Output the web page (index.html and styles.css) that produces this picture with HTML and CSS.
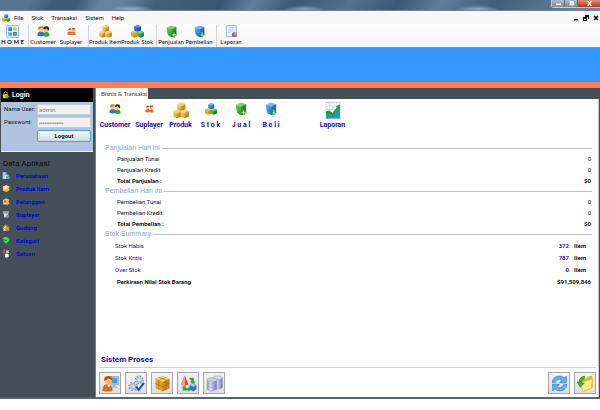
FILE: index.html
```html
<!DOCTYPE html>
<html lang="id">
<head>
<meta charset="utf-8">
<title>Sistem Stok</title>
<link rel="stylesheet" href="styles.css">
</head>
<body>
<svg class="defs" aria-hidden="true">
  <defs>
    <linearGradient id="gold" x2="1" y2="1"><stop stop-color="#ffe36a"/><stop offset="1" stop-color="#c98a06"/></linearGradient>
    <linearGradient id="green" x2="1" y2="1"><stop stop-color="#6fdc5a"/><stop offset="1" stop-color="#117a1d"/></linearGradient>
    <linearGradient id="blue" x2="1" y2="1"><stop stop-color="#5fb8ff"/><stop offset="1" stop-color="#0b5cc0"/></linearGradient>
    <linearGradient id="disk"><stop stop-color="#8f91c4"/><stop offset=".35" stop-color="#dcdcf2"/><stop offset="1" stop-color="#7377b4"/></linearGradient>
    <symbol id="cube" viewBox="0 0 16 16"><path d="M1 5q0-1 1-2l5-2q1-.4 2 0l5 2q1 1 1 2v6q0 1-1 2l-5 2q-1 .6-2 0l-5-2q-1-1-1-2z"/><path d="M2 4l6 3 6-3-5-2.500q-1-.4-2 0z" fill="#fff" opacity=".3"/><path d="M8 7v8.300l6-2.300q1-1 1-2V4.500z" fill="#000" opacity=".14"/></symbol>
    <symbol id="cubes-gold" viewBox="0 0 32 32"><g fill="url(#gold)"><use href="#cube" x="7" y="-1" width="19" height="19"/><use href="#cube" x="-1" y="13" width="19" height="19"/><use href="#cube" x="14" y="13" width="19" height="19"/></g></symbol>
    <symbol id="cubes-mix" viewBox="0 0 32 32"><use href="#cube" x="7" y="-1" width="19" height="19" fill="url(#blue)"/><use href="#cube" x="-1" y="13" width="19" height="19" fill="#e3ad10"/><use href="#cube" x="14" y="13" width="19" height="19" fill="url(#green)"/></symbol>
    <symbol id="cubes-stock" viewBox="0 0 32 32"><use href="#cube" x="7" y="-1" width="19" height="19" fill="#1766d4"/><use href="#cube" x="-1" y="13" width="19" height="19" fill="#e3ad10"/><use href="#cube" x="14" y="13" width="19" height="19" fill="url(#green)"/></symbol>
    <symbol id="people" viewBox="0 0 32 28"><path d="M1 24q0-10 9-10t9 10q-9 4-18 0z" fill="#2573d4"/><circle cx="10" cy="9" r="6" fill="#f6c184"/><path d="M3 9q-1-8 7-8 8 0 7 7l-5-3q-5 3-9 4z" fill="#c57b10"/><path d="M15 25q0-10 8-10t8 10q-8 4-16 0z" fill="#35a342"/><circle cx="22" cy="10" r="6" fill="#f4bd82"/><path d="M16 9q-1-8 7-8 7 0 7 8l-3 4q0-5-4-7-3 3-7 3z" fill="#2c2018"/></symbol>
    <symbol id="suppliers" viewBox="0 0 32 28"><path d="M1 24q0-10 9-10t9 10q-9 4-18 0z" fill="#df6a1c"/><circle cx="10" cy="10" r="5" fill="#f6c184"/><path d="M4 9q0-7 7-7 6 0 6 6l-5-2q-4 3-8 3z" fill="#b03010"/><path d="M15 25q0-10 8-10t8 10q-8 4-16 0z" fill="#e8832a"/><path d="M21 17h4l-2 7z" fill="#326fc3"/><circle cx="23" cy="9" r="6" fill="#f4bd82"/><path d="M17 8q0-7 7-7 6 0 6 7l-6-2q-3 2-7 2z" fill="#d0501a"/></symbol>
    <symbol id="box-shape" viewBox="0 0 28 32"><path d="M2 6L13 1l13 4v15q-3 8-11 10Q6 28 4 22z"/><path d="M2 6L13 1l13 4-11 6z" fill="#fff" opacity=".3"/><path d="M15 11l11-6v15q-3 8-11 10z" fill="#000" opacity=".16"/></symbol>
    <symbol id="sell" viewBox="0 0 28 32"><use href="#box-shape" fill="url(#green)"/><path d="M18 18h4v4h4v4h-4v4h-4v-4h-4v-4h4z" fill="#9cf56e" stroke="#0c7115"/></symbol>
    <symbol id="buy" viewBox="0 0 28 32"><use href="#box-shape" fill="url(#blue)"/><path d="M18 17h5v6h4l-6 7-7-7h4z" fill="#73e34c" stroke="#1b65a3"/></symbol>
    <symbol id="home" viewBox="0 0 28 28"><rect x="1" y="1" width="26" height="26" rx="2" fill="#d7efff" stroke="#87bce3" stroke-width="2"/><path d="M5 5h8v8H5z" fill="#318bcf"/><path d="M16 5h7v7h-7z" fill="#f1c739"/><path d="M5 16h8v7H5z" fill="#55a8d5"/><path d="M15 15h8v8h-8z" fill="#2a71b8"/><path d="M17 17h4v4h-4z" fill="#78d160"/></symbol>
    <symbol id="report" viewBox="0 0 28 30"><path d="M2 1h23v26H2z" fill="#eef0fb" stroke="#a1a6ce" stroke-width="2"/><path d="M6 6h15M6 11h15M6 16h10M11 4v16M17 4v12" stroke="#bfc3e2" stroke-width="1.500"/><circle cx="21" cy="22" r="6" fill="#7a83c0"/><path d="M21 22v-6a6 6 0 0 1 6 6z" fill="#ecaa70"/><path d="M15 22h6l-4 5z" fill="#b23f46"/></symbol>
    <symbol id="chart" viewBox="0 0 30 34"><path d="M1 1h28v32H1z" fill="#f9fafc" stroke="#9ba8b5"/><path d="M1 8h28M1 15h28M8 1v20M15 1v18M22 1v15" stroke="#b9c3cb"/><path d="M1 33V24l7-2 6 4 15-13v20z" fill="#2a8fe0"/><path d="M1 19l7-2 6 5L23 10l-3-1 9-4v13l-3-3-11 14-7-5-7 2z" fill="#20a32a"/></symbol>
    <symbol id="lock" viewBox="0 0 20 20"><path d="M5 9V6q0-4 4-4t4 4v3" fill="none" stroke="#d6d6c2" stroke-width="2"/><rect x="2" y="8" width="13" height="10" rx="2" fill="#e4d326"/><path d="M8 12h5V9l6 5-6 5v-3H8z" fill="#37c42d"/></symbol>
    <symbol id="company" viewBox="0 0 24 24"><path d="M2 2h11v20H2z" fill="#bcdcf6"/><path d="M4 5h3M9 5h3M4 9h3M9 9h3M4 13h3" stroke="#4c83b5" stroke-width="2"/><path d="M10 10h10v12H8z" fill="#e8f4fd"/><circle cx="18" cy="17" r="6" fill="#338ed6"/><path d="M18 13v1M18 16v5" stroke="#fff" stroke-width="2"/></symbol>
    <symbol id="item" viewBox="0 0 24 24"><path d="M2 7l10-5 10 4v11l-9 6-10-5z" fill="#efb93e"/><path d="M2 7l10-5 10 4-9 6z" fill="#ffe49a"/><circle cx="9" cy="12" r="4" fill="#fff3ce"/></symbol>
    <symbol id="client" viewBox="0 0 24 24"><path d="M2 8l10-6 10 5-2 5H4z" fill="#e9c37b"/><path d="M4 10h14v11H4z" fill="#eae3d8"/><circle cx="10" cy="12" r="4" fill="#b67131"/><circle cx="17" cy="16" r="5" fill="#f0b451"/><path d="M5 22q4-7 9 0z" fill="#9e7fc1"/></symbol>
    <symbol id="vendor" viewBox="0 0 24 24"><path d="M2 3h19l-2 7H4z" fill="#cad7cf"/><path d="M2 5h19" stroke="#6c9b85" stroke-width="3"/><path d="M6 10h13v11H6z" fill="#aeb8c2"/><circle cx="10" cy="14" r="4" fill="#f0e9dd"/><path d="M13 14h8v7h-8z" fill="#8979bb"/></symbol>
    <symbol id="warehouse" viewBox="0 0 24 24"><path d="M1 12L11 2l11 9-3 2v9H4v-9z" fill="#f4dbc0"/><path d="M1 12L11 2l11 9-3 2-8-7-8 8z" fill="#a45828"/><path d="M10 13l6-3 6 3v7l-6 3-6-3z" fill="#d68c35"/></symbol>
    <symbol id="category" viewBox="0 0 24 24"><path d="M1 5l10-4 11 5v11l-9 6Q3 19 1 5z" fill="#159c42"/><path d="M1 5l10-4 11 5-9 5z" fill="#56d16e"/><path d="M7 13l5 5 9-9" fill="none" stroke="#b8f7ba" stroke-width="3"/></symbol>
    <symbol id="unit" viewBox="0 0 24 26"><path d="M3 1h6v11H3z" fill="#e9473a"/><path d="M13 4h8v7h-8z" fill="#efefe8"/><path d="M17 3l4 4-4 2z" fill="#37ad45"/><rect x="9" y="13" width="11" height="12" rx="4" fill="#f5f5ef"/><path d="M2 14h5v7H2z" fill="#ae2a2a"/></symbol>
    <symbol id="user-pc" viewBox="0 0 32 32"><path d="M13 3h18v15H13z" fill="#c8dcef" stroke="#5f83ad"/><path d="M15 5h14v11H15z" fill="#5397d8"/><path d="M20 18h5v4h4v2H16v-2h4z" fill="#9fb1c3"/><path d="M1 30q-1-12 9-13 10 1 10 13-9 2-19 0z" fill="#e36b16"/><path d="M9 18l4 5 3-5z" fill="#fff"/><circle cx="12" cy="11" r="7" fill="#f8bb72"/><path d="M4 11q-1-9 8-9 8 0 7 8l-7-4q-3 4-8 5z" fill="#b85808"/></symbol>
    <symbol id="gear" viewBox="0 0 20 20"><circle cx="10" cy="10" r="7.500" stroke-width="4" stroke-dasharray="3 2.900" fill="none" stroke="#8d93ba"/><circle cx="10" cy="10" r="5" fill="none" stroke="#b5bbdc" stroke-width="4"/></symbol>
    <symbol id="gears" viewBox="0 0 32 32"><use href="#gear" x="12" y="0" width="18" height="18"/><use href="#gear" x="0" y="12" width="19" height="19"/><path d="M15 22l5 6 10-13" fill="none" stroke="#1658bd" stroke-width="4"/></symbol>
    <symbol id="package" viewBox="0 0 32 32"><path d="M3 7l13-5 13 5v18l-13 6-13-6z" fill="#dfa52b"/><path d="M3 7l13-5 13 5-13 6z" fill="#f6d272"/><path d="M16 13l13-6v18l-13 6z" fill="#c4861a"/><path d="M9 4.500L23 10v18M23 4.500L9 10v18M3 16l13 6 13-6" fill="none" stroke="#94661c"/></symbol>
    <symbol id="shapes" viewBox="0 0 32 32"><path d="M9 1l7 17q-8 4-14 0z" fill="#e2422b"/><path d="M9 1l1 18q-5 1-8-1z" fill="#ff9b7e"/><path d="M18 5h8v7h4l-6 6-6-6h3V9h-3zM5 21h6v4h5v-4l5 6-5 5v-3H5z" fill="#28a83a"/><path d="M18 19l6-3 7 3v8l-6 4-7-4z" fill="#3472c9"/><path d="M18 19l6-3 7 3-6 3z" fill="#9ac7f5"/></symbol>
    <symbol id="database" viewBox="0 0 32 32"><g stroke="#8587ba" stroke-width=".7"><path d="M14 5v19q8 5 17 0V5z" fill="url(#disk)"/><ellipse cx="22.500" cy="5" rx="8.500" ry="3.500" fill="#d9d9ef"/><path d="M2 9v18q9 6 18 0V9z" fill="url(#disk)"/><ellipse cx="11" cy="9" rx="9" ry="4" fill="#c9c9e6"/><path d="M2 15q9 5 18 0M2 21q9 5 18 0" fill="none"/></g></symbol>
    <symbol id="refresh" viewBox="0 0 32 32"><g fill="#63b0f0" stroke="#2268b8"><path d="M2 14Q4 2 16 2q6 0 9 4l4-4v13H16l4-5q-4-3-7-1-4 2-5 5z"/><path d="M30 18q-2 12-14 12-6 0-9-4l-4 4V17h13l-4 5q4 3 7 1 4-2 5-5z"/></g></symbol>
    <symbol id="folder" viewBox="0 0 32 32"><path d="M8 9l10-3 2-3 9-2 1 22-16 8z" fill="#e9b528"/><path d="M6 14l23-7-2 18-16 6z" fill="#fff080" stroke="#d6a51d"/><path d="M14 2v5q-6 1-5 8h5l-8 8-6-10h4Q4 4 14 2z" fill="#35b52c" stroke="#14821c"/></symbol>
  </defs>
</svg>

<div class="app">
  <header class="titlebar">
    <div class="window-controls">
      <button class="win" aria-label="Minimize"><svg viewBox="0 0 8 6"><path d="M1 3h6v2H1z"/></svg></button>
      <button class="win" aria-label="Restore"><svg viewBox="0 0 8 6"><path d="M2 0h4v1h1v4H2zM4 2v2h1V2z" fill-rule="evenodd"/></svg></button>
      <button class="win close" aria-label="Close"><svg viewBox="0 0 8 6"><path d="M1 0h2l1 2 1-2h2L5 3l2 3H5L4 4 3 6H1l2-3z"/></svg></button>
    </div>
  </header>

  <nav class="menubar">
    <svg class="app-icon"><use href="#cubes-mix"/></svg>
    <button>File</button><button>Stok</button><button>Transaksi</button><button>Sistem</button><button>Help</button>
    <div class="child-controls">
      <button aria-label="Minimize child"><svg viewBox="0 0 6 6"><path d="M1 4h4v1.500H1z"/></svg></button>
      <button aria-label="Restore child"><svg viewBox="0 0 6 6"><path d="M2 0h4v4H5V2H2zM0 2h4v4H0zM1 4v1h2V4z" fill-rule="evenodd"/></svg></button>
      <button aria-label="Close child"><svg viewBox="0 0 6 6"><path d="M1 1l4 4M5 1L1 5" stroke="#000" stroke-width="1.500"/></svg></button>
    </div>
  </nav>

  <div class="toolbar">
    <div class="group"><button class="home"><svg><use href="#home"/></svg>H O M E</button></div>
    <div class="group pair"><button><svg><use href="#people"/></svg>Customer</button><button><svg class="small"><use href="#suppliers"/></svg>Suplayer</button></div>
    <div class="group wide"><button><svg><use href="#cubes-gold"/></svg>Produk Item</button><button><svg><use href="#cubes-stock"/></svg>Produk Stok</button></div>
    <div class="group pair"><button><svg><use href="#sell"/></svg>Penjualan</button><button><svg><use href="#buy"/></svg>Pembelian</button></div>
    <div class="group"><button><svg><use href="#report"/></svg>Laporan</button></div>
  </div>

  <div class="banner"></div>

  <div class="body">
    <aside class="sidebar">
      <form class="login">
        <h2><svg><use href="#lock"/></svg>Login</h2>
        <div class="fields">
          <label for="user">Nama User:</label><input id="user" type="text" value="admin">
          <label for="pass">Password:</label><input id="pass" type="password" value="secretpassword">
          <button type="button">Logout</button>
        </div>
      </form>
      <h2 class="side-title">Data Aplikasi</h2>
      <nav class="links">
        <a href="#"><svg><use href="#company"/></svg>Perusahaan</a>
        <a href="#"><svg><use href="#item"/></svg>Produk Item</a>
        <a href="#"><svg><use href="#client"/></svg>Pelanggan</a>
        <a href="#"><svg><use href="#vendor"/></svg>Suplayer</a>
        <a href="#"><svg><use href="#warehouse"/></svg>Gudang</a>
        <a href="#"><svg><use href="#category"/></svg>Kategori</a>
        <a href="#"><svg><use href="#unit"/></svg>Satuan</a>
      </nav>
    </aside>

    <main class="main">
      <div class="tabs"><button class="tab">Bisnis &amp; Transaksi</button></div>
      <div class="panel">
        <div class="shortcuts">
          <a href="#"><svg><use href="#people"/></svg>Customer</a>
          <a href="#"><svg class="small"><use href="#suppliers"/></svg>Suplayer</a>
          <a href="#"><svg class="large"><use href="#cubes-gold"/></svg>Produk</a>
          <a href="#"><svg><use href="#cubes-mix"/></svg>S t o k</a>
          <a href="#"><svg><use href="#sell"/></svg>J u a l</a>
          <a href="#"><svg><use href="#buy"/></svg>B e l i</a>
          <a href="#" class="last"><svg class="large"><use href="#chart"/></svg>Laporan</a>
        </div>

        <div class="summary">
          <section>
            <h3>Panjualan Hari ini</h3>
            <table>
              <tr><th>Panjualan Tunai</th><td>0</td></tr>
              <tr><th>Penjualan Kredit</th><td>0</td></tr>
              <tr class="total"><th>Total Panjualan :</th><td>$0</td></tr>
            </table>
          </section>
          <section>
            <h3>Pembelian Hari ini</h3>
            <table>
              <tr><th>Pembelian Tunai</th><td>0</td></tr>
              <tr><th>Pembelian Kredit</th><td>0</td></tr>
              <tr class="total"><th>Total Pembelian :</th><td>$0</td></tr>
            </table>
          </section>
          <section>
            <h3>Stok Summary</h3>
            <table class="stock">
              <tr><th>Stok Habis</th><td class="count">372</td><td class="unit">Item</td></tr>
              <tr><th>Stok Kritis</th><td class="count">787</td><td class="unit">Item</td></tr>
              <tr><th>Over Stok</th><td class="count">0</td><td class="unit">Item</td></tr>
              <tr class="total"><th>Perkiraan Nilai Stok Barang</th><td colspan="2">$91,509,846</td></tr>
            </table>
          </section>
        </div>

        <footer class="process">
          <h2>Sistem Proses</h2>
          <div class="actions">
            <button aria-label="Pengguna"><svg><use href="#user-pc"/></svg></button>
            <button aria-label="Pengaturan"><svg><use href="#gears"/></svg></button>
            <button aria-label="Paket"><svg><use href="#package"/></svg></button>
            <button aria-label="Konversi"><svg><use href="#shapes"/></svg></button>
            <button aria-label="Basis data"><svg><use href="#database"/></svg></button>
            <button class="push" aria-label="Muat ulang"><svg><use href="#refresh"/></svg></button>
            <button aria-label="Buka folder"><svg><use href="#folder"/></svg></button>
          </div>
        </footer>
      </div>
    </main>
  </div>
</div>
</body>
</html>
```
FILE: styles.css
```css
* { box-sizing: border-box; }

body {
  margin: 0;
  background: #fff;
  color: #111;
  font: 6px/10px Roboto, "Liberation Sans", sans-serif;
}

button, input { font: inherit; color: inherit; margin: 0; padding: 0; }
button { border: 0; background: none; white-space: nowrap; }
h2, h3 { margin: 0; }
a { text-decoration: none; }
svg { display: block; flex: none; }
.defs { position: absolute; width: 0; height: 0; }

.app {
  display: flex;
  flex-direction: column;
  min-height: calc(100vh - 11px);
}

/* Window title bar */
.titlebar {
  height: 11px;
  display: flex;
  justify-content: flex-end;
  background:
    radial-gradient(ellipse 22px 6px at 132px 11px, #a9c6e2, transparent),
    radial-gradient(ellipse 22px 6px at 304px 11px, #a0bddb, transparent),
    radial-gradient(ellipse 22px 6px at 478px 11px, #a4c3e2, transparent),
    linear-gradient(120deg, #587590 0 5%, #415a75 9% 13%, #67849e 17% 20%, #465f79 26%, #3c5570 37%, #627f9b 42%, #3d5671 49%, #56718c 58%, #3d5772 66%, #607d98 73%, #435d78 82%, #718aa3);
  border-bottom: 1px solid #748599;
}
.window-controls { display: flex; height: 8px; border: 1px solid #c4cbd6; border-top: 0; border-right: 0; border-radius: 0 0 0 3px; }
.win { width: 13px; display: flex; align-items: center; justify-content: center; background: linear-gradient(#aebac9, #7c8ca1); border-right: 1px solid #56667c; }
.win svg { width: 7px; height: 5px; fill: #fff; }
.win.close { width: 22px; background: linear-gradient(#d9917f, #bd2f16); border: 0; }

/* Menu and toolbar */
.menubar {
  display: flex;
  align-items: center;
  gap: 8px;
  height: 13px;
  padding: 0 1px 0 2px;
  background: #f7f7f8;
}
.app-icon { width: 8px; height: 8px; margin-right: -4px; }
.child-controls { display: flex; gap: 4px; margin-left: auto; }
.child-controls svg { width: 6px; height: 6px; }

.toolbar {
  display: flex;
  align-items: center;
  height: 24px;
  background: linear-gradient(#fcfcfd, #f3f4f6);
  border-bottom: 1px solid #8a9099;
  font-family: Lato, "Liberation Sans", sans-serif;
}
.group { display: flex; border-left: 1px solid #d2d4d8; }
.group:first-child { border: 0; }
.group.pair, .group.wide { padding-right: 3px; }
.group button { width: 28px; display: flex; flex-direction: column; align-items: center; padding-bottom: 2px; line-height: 7px; }
.group.wide button { width: 32px; }
.group svg { width: 13px; height: 13px; }
.group svg.small { width: 9px; }
.group .home { width: 28px; padding-right: 3px; font-weight: bold; }

.banner { height: 40px; background: #3399ff; border-bottom: 6px solid #ff7f50; }

/* Body */
.body { flex: 1; display: flex; background: #445058; border-bottom: 2px solid #59656c; }
.sidebar { width: 96px; flex: none; border-right: 1px solid #75838a; }

.login { margin: 0 2px 0 1px; background: #b0c4e0; border-bottom: 1px solid #eef3fa; }
.login h2 {
  display: flex;
  align-items: center;
  gap: 2px;
  height: 14px;
  padding-left: 1px;
  background: #000;
  color: #fff;
  font-size: 7px;
}
.login h2 svg { width: 8px; height: 8px; }
.fields { display: grid; grid-template-columns: 33px 1fr; row-gap: 2px; padding: 2px 2px 9px 3px; white-space: nowrap; }
.fields input { width: 100%; height: 11px; padding: 0 1px; border: 1px solid #c5ccd5; background: #f0f0f0; color: #808080; }
.fields input[type="password"] { font: 5px/9px "Liberation Sans", sans-serif; }
.fields button {
  grid-column: 2;
  height: 12px;
  border: 1px solid #45a5cd;
  border-radius: 2px;
  background: linear-gradient(#f4f8fa, #cfdbe2);
  font-weight: bold;
}

.side-title { padding: 7px 0 0 3px; color: #080808; font-size: 8px; font-weight: normal; }
.links { display: flex; flex-direction: column; }
.links a { display: flex; align-items: center; gap: 6px; height: 13px; padding-left: 2px; color: #0000f4; font-weight: bold; }
.links svg { width: 8px; height: 9px; }

.main { flex: 1; display: flex; flex-direction: column; }
.tabs { display: flex; height: 11px; }
.tab { padding: 0 1px 0 5px; background: #fff; color: #333; font-family: Lato, "Liberation Sans", sans-serif; }
.panel { flex: 1; display: flex; flex-direction: column; margin-right: 1px; background: #fff; border-right: 1px solid #c2cbcf; }

.shortcuts {
  display: grid;
  grid-template-columns: 34px 34px 29px 31px 30px 30px 60px;
  align-items: start;
  padding: 3px 0 0 2px;
}
.shortcuts a {
  display: grid;
  grid-template-rows: 18px 10px;
  justify-items: center;
  color: #1010b8;
  font-size: 7px;
  font-weight: bold;
  white-space: nowrap;
}
.shortcuts .last { margin-left: 33px; }
.shortcuts svg { width: 12px; height: 14px; }
.shortcuts svg.small { width: 9px; }
.shortcuts svg.large { width: 16px; height: 17px; }

.summary { padding: 13px 6px 0 9px; }
h3 { display: flex; align-items: center; gap: 2px; color: #87a5c6; font: 7px/10px "Liberation Sans", sans-serif; }
h3::after { content: ""; flex: 1; height: 1px; background: #bfc2c5; }
table { width: 100%; border-collapse: collapse; }
th, td { height: 11px; padding: 0 1px; text-align: right; font-weight: normal; }
th { padding-left: 12px; text-align: left; }
.total th, .total td { font-weight: bold; }
.stock { margin-top: 1px; }
.stock th, .stock td { height: 12px; }
.stock tr:not(.total) th { padding-left: 10px; color: #1414a8; }
.stock .count { color: #1414d0; font-weight: bold; }
.stock .unit { width: 22px; padding-left: 4px; text-align: left; font-weight: bold; }

.process { margin-top: auto; padding: 0 2px 3px 3px; }
.process h2 { padding: 0 0 1px 2px; color: #1010c0; font-size: 8px; line-height: 12px; }
.actions { display: flex; gap: 4px; padding-top: 4px; border-top: 1px solid #cbd2d5; }
.actions button { width: 22px; height: 22px; display: grid; place-items: center; border: 1px solid #a5a8aa; background: linear-gradient(#f4f4f4, #dedede); }
.actions svg { width: 17px; height: 17px; }
.actions .push { margin-left: auto; }
```
